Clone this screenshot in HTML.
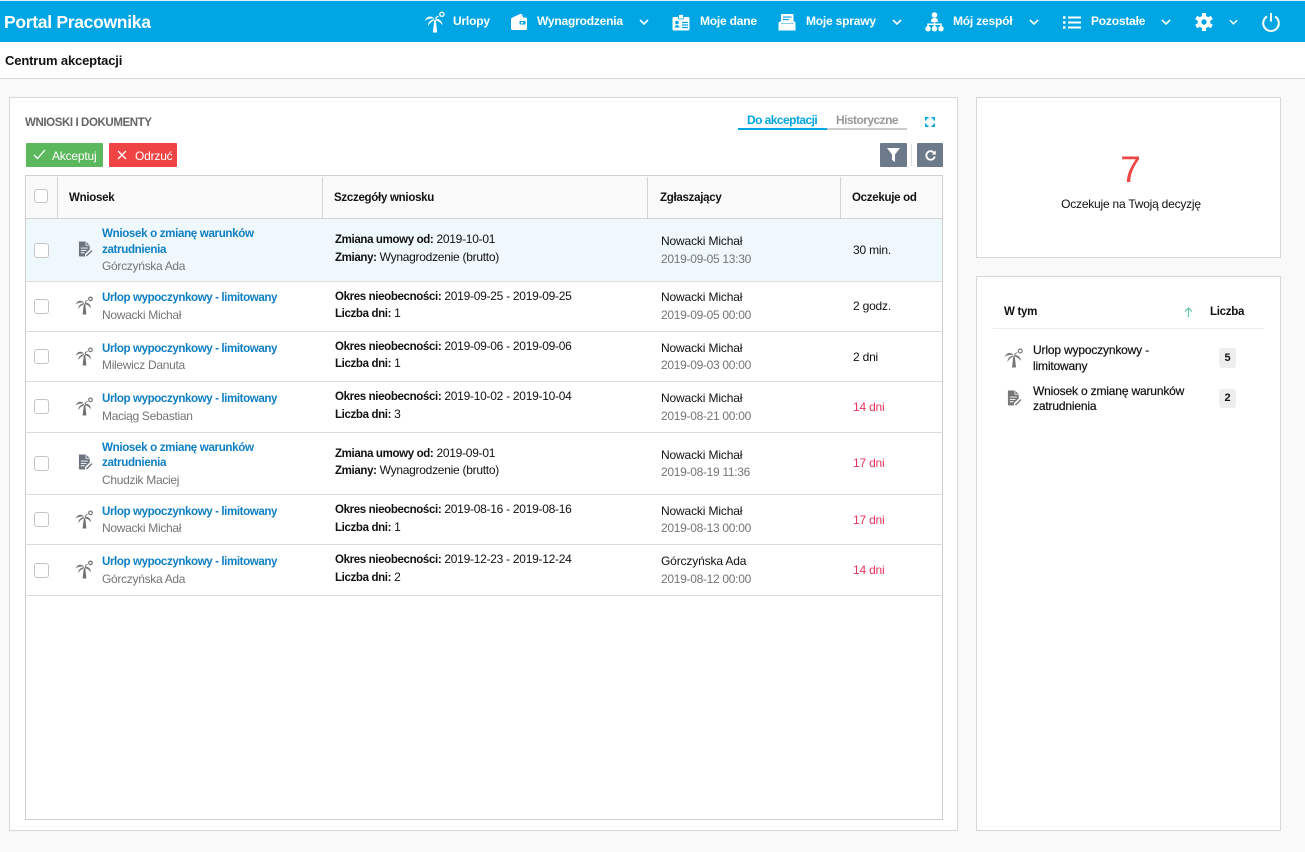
<!DOCTYPE html>
<html lang="pl">
<head>
<meta charset="utf-8">
<title>Portal Pracownika</title>
<style>
html,body{margin:0;padding:0;width:1305px;height:852px;overflow:hidden;background:#f9f9f9;font-family:"Liberation Sans",Arial,sans-serif;font-size:12px;color:#111}
.a{position:absolute}
.t{position:absolute;white-space:nowrap;line-height:16px;font-size:12px;letter-spacing:-.1px}
.b{font-weight:bold}
.h{font-weight:bold;font-size:11.5px;letter-spacing:-.28px;color:#111;margin-top:1px}
.top{position:absolute;left:0;top:1px;width:1305px;height:41px;background:#00a5e3}
.n{position:absolute;white-space:nowrap;color:#fff;font-weight:bold;font-size:12px;line-height:16px;top:13px;letter-spacing:-.2px}
.panel{position:absolute;background:#fff;border:1px solid #d8d8d8;box-sizing:border-box}
.line{position:absolute;height:1px;background:#dcdcdc;left:26px;width:916px}
.v{position:absolute;width:1px;background:#d4d4d4;top:177px;height:41px}
.cb{position:absolute;box-sizing:border-box;width:15px;height:15px;border:1px solid #c4c4c4;border-radius:3px;background:#fff;left:34px}
.l{color:#0f7fc4;font-weight:bold;font-size:11.6px;letter-spacing:-.42px;margin-top:1px}
.l2{letter-spacing:-.35px}
.g{color:#757575;letter-spacing:-.3px}
.r{color:#e8345f}
.d{color:#111;letter-spacing:-.15px}
.s{color:#111;letter-spacing:-.27px}
.s b{font-size:11.5px;letter-spacing:-.36px}
.w{letter-spacing:-.2px}
svg{position:absolute;overflow:visible}
</style>
</head>
<body>
<svg width="0" height="0" style="left:0;top:0">
<defs>
<symbol id="palm" viewBox="0 0 20 20">
<path d="M9.500 7C7 4 3 4 .5 9C3 7 6 6.500 9.500 7Z" fill="currentColor"/>
<path d="M9.500 7.500C6 8 3.500 10 3.500 14C5 11 7 9.500 9.500 8.500Z" fill="currentColor"/>
<path d="M10 7C11 4.800 12.500 4 14 4.500C12.500 5.300 11.500 6 10.800 7.500Z" fill="currentColor"/>
<path d="M10.500 7C14 7 16.500 9 17 13C15 10.500 13 9 10.500 8.500Z" fill="currentColor"/>
<path d="M9.300 8.500H10.800L12 19.500H8Z" fill="currentColor"/>
<circle cx="16.300" cy="3" r="1.900" fill="none" stroke="currentColor" stroke-width="1.200"/>
</symbol>
<symbol id="doc" viewBox="0 0 16 16">
<path d="M1 0H8.500L12.500 4V8.500L7.500 13.500V16H2.500A1.500 1.500 0 0 1 1 14.500Z" fill="currentColor"/>
<path d="M8.500 0V4H12.500" fill="none" stroke="#fff" stroke-width=".8"/>
<path d="M3 7H10.500M3 9.500H9M3 12H7" stroke="#fff" stroke-width="1" fill="none"/>
<path d="M9 15.500L14.800 9.700" stroke="currentColor" stroke-width="1.500" fill="none"/>
</symbol>
<symbol id="chev" viewBox="0 0 10 6">
<path d="M1 1L5 5L9 1" fill="none" stroke="#fff" stroke-width="1.600"/>
</symbol>
</defs>
</svg>

<div class="a" style="left:0;top:0;width:1305px;height:1px;background:#d9f1fb"></div>
<div class="top"></div>
<div class="a" style="left:4px;top:11px;color:#fff;font-weight:bold;font-size:17.500px;line-height:22px;white-space:nowrap;letter-spacing:-.3px">Portal Pracownika</div>

<svg style="left:424px;top:11px;color:#fff" width="22" height="22"><use href="#palm" width="22" height="22"/></svg>
<div class="n" style="left:453px">Urlopy</div>

<svg style="left:510px;top:13px" width="18" height="18" viewBox="0 0 18 18"><path d="M1 6.500C1 5.500 1.500 5 2.500 4.500L10 1C11 .6 11.800 1 12.200 2L13.200 4.500H15.500C16.500 4.500 17 5 17 6V15.500C17 16.500 16.500 17 15.500 17H2.500C1.500 17 1 16.500 1 15.500Z" fill="#fff"/><rect x="9.500" y="8" width="6" height="3.500" rx=".5" fill="#00a5e3"/><rect x="11" y="9" width="2" height="1.500" fill="#fff"/></svg>
<div class="n" style="left:537px">Wynagrodzenia</div>
<svg style="left:639px;top:19px" width="10" height="6"><use href="#chev" width="10" height="6"/></svg>

<svg style="left:672px;top:14px" width="18" height="17" viewBox="0 0 18 17"><rect x="0.500" y="3" width="17" height="13.500" rx="1.500" fill="#fff"/><rect x="6.500" y=".5" width="5" height="4.500" rx=".5" fill="#fff" stroke="#00a5e3" stroke-width=".8"/><circle cx="5" cy="8.500" r="1.800" fill="#00a5e3"/><path d="M2.500 13.500C2.500 10.500 7.500 10.500 7.500 13.500Z" fill="#00a5e3"/><path d="M10 8.500H16M10 11H16M10 13.500H16" stroke="#00a5e3" stroke-width="1.200"/></svg>
<div class="n" style="left:700px">Moje dane</div>

<svg style="left:778px;top:13px" width="18" height="18" viewBox="0 0 18 18"><rect x="3" y="1" width="12.500" height="9.500" rx=".8" fill="#fff"/><path d="M5 3.500H13.500V4.600H5ZM5 6H11V7.100H5Z" fill="#00a5e3"/><path d="M1 9.300L3 8V11H15.500V8L17.500 9.300V17.500H.5V9.800Z" fill="#fff"/></svg>
<div class="n" style="left:806px">Moje sprawy</div>
<svg style="left:892px;top:19px" width="10" height="6"><use href="#chev" width="10" height="6"/></svg>

<svg style="left:925px;top:12px" width="19" height="20" viewBox="0 0 19 20"><circle cx="9.500" cy="3" r="2.800" fill="#fff"/><path d="M6 10C6 7 7 6 9.500 6S13 7 13 10Z" fill="#fff"/><path d="M9.500 9V12M3 15V12.200H16V15M9.500 12V15" stroke="#fff" stroke-width="1.500" fill="none"/><circle cx="3" cy="16.700" r="2.700" fill="#fff"/><circle cx="9.500" cy="16.700" r="2.700" fill="#fff"/><circle cx="16" cy="16.700" r="2.700" fill="#fff"/></svg>
<div class="n" style="left:953px">Mój zespół</div>
<svg style="left:1029px;top:19px" width="10" height="6"><use href="#chev" width="10" height="6"/></svg>

<svg style="left:1063px;top:16px" width="18" height="13" viewBox="0 0 18 13"><path d="M5 1.500H18M5 6.500H18M5 11.500H18" stroke="#fff" stroke-width="2"/><path d="M0 1.500H2.500M0 6.500H2.500M0 11.500H2.500" stroke="#fff" stroke-width="2.400"/></svg>
<div class="n" style="left:1091px">Pozostałe</div>
<svg style="left:1161px;top:19px" width="10" height="6"><use href="#chev" width="10" height="6"/></svg>

<svg style="left:1195px;top:13px" width="18" height="18" viewBox="0 0 18 18"><circle cx="9" cy="9" r="6.300" fill="#fff"/><g stroke="#fff" stroke-width="4"><path d="M9 0V18"/><path d="M1.200 4.500L16.800 13.500"/><path d="M16.800 4.500L1.200 13.500"/></g><circle cx="9" cy="9" r="2.700" fill="#00a5e3"/></svg>
<svg style="left:1229px;top:19px" width="9" height="6"><use href="#chev" width="9" height="6"/></svg>

<svg style="left:1262px;top:12px" width="18" height="19" viewBox="0 0 18 19"><path d="M5 4.500A7.800 7.800 0 1 0 13 4.500" fill="none" stroke="#fff" stroke-width="2"/><path d="M9 1V9.500" stroke="#fff" stroke-width="2"/></svg>

<div class="a" style="left:0;top:42px;width:1305px;height:37px;background:#fff;border-bottom:1px solid #dcdcdc;box-sizing:border-box"></div>
<div class="t b" style="left:5px;top:53px;color:#111;font-size:13px;letter-spacing:-.15px">Centrum akceptacji</div>

<div class="panel" style="left:9px;top:97px;width:949px;height:734px"></div>
<div class="t b" style="left:25px;top:115px;color:#666;font-size:11.500px;letter-spacing:-.4px">WNIOSKI I DOKUMENTY</div>

<div class="t b" style="left:747px;top:112px;color:#00a5e3;letter-spacing:-.55px">Do akceptacji</div>
<div class="t b" style="left:836px;top:112px;color:#999;letter-spacing:-.55px">Historyczne</div>
<div class="a" style="left:738px;top:128px;width:89px;height:2px;background:#00a5e3"></div>
<div class="a" style="left:827px;top:128px;width:80px;height:2px;background:#ccc"></div>
<svg style="left:925px;top:117px" width="10" height="10" viewBox="0 0 10 10"><path d="M.8 3.500V.8H3.500M6.500 .8H9.200V3.500M9.200 6.500V9.200H6.500M3.500 9.200H.8V6.500" fill="none" stroke="#00a5e3" stroke-width="1.600"/></svg>

<div class="a" style="left:26px;top:143px;width:77px;height:24px;background:#5cb85c;border-radius:1px"></div>
<svg style="left:33px;top:149px" width="13" height="11" viewBox="0 0 13 11"><path d="M1 6L4.500 9.500L12 1" fill="none" stroke="#fff" stroke-width="1.300"/></svg>
<div class="t" style="left:52px;top:148px;color:#fff;letter-spacing:-.2px">Akceptuj</div>
<div class="a" style="left:109px;top:143px;width:68px;height:24px;background:#ef4444;border-radius:1px"></div>
<svg style="left:117px;top:150px" width="10" height="10" viewBox="0 0 10 10"><path d="M1 1L9 9M9 1L1 9" fill="none" stroke="#fff" stroke-width="1.300"/></svg>
<div class="t" style="left:135px;top:148px;color:#fff;letter-spacing:-.2px">Odrzuć</div>

<div class="a" style="left:880px;top:143px;width:27px;height:24px;background:#6c7a89;border-radius:1px"></div>
<svg style="left:887px;top:148px" width="13" height="14" viewBox="0 0 13 14"><path d="M0 0H13L8 6.500V14L5 12V6.500Z" fill="#fff"/></svg>
<div class="a" style="left:911px;top:144px;width:1px;height:22px;background:#ddd"></div>
<div class="a" style="left:917px;top:143px;width:26px;height:24px;background:#6c7a89;border-radius:1px"></div>
<svg style="left:925px;top:150px" width="11" height="11" viewBox="0 0 11 11"><path d="M9.300 3.200A4.300 4.300 0 1 0 9.800 6.500" fill="none" stroke="#fff" stroke-width="1.800"/><path d="M10.800 .5V4.500H6.800Z" fill="#fff"/></svg>

<div class="a" style="left:25px;top:175px;width:918px;height:645px;box-sizing:border-box;border:1px solid #cfcfcf;background:#fff"></div>
<div class="a" style="left:26px;top:176px;width:916px;height:42px;background:#fafafa"></div>
<div class="a" style="left:26px;top:218px;width:916px;height:1px;background:#d4d4d4"></div>
<div class="v" style="left:57px"></div>
<div class="v" style="left:322px"></div>
<div class="v" style="left:647px"></div>
<div class="v" style="left:840px"></div>
<div class="cb" style="top:189px;width:14px;height:14px"></div>
<div class="t h" style="left:69px;top:189px">Wniosek</div>
<div class="t h" style="left:334px;top:189px">Szczegóły wniosku</div>
<div class="t h" style="left:660px;top:189px">Zgłaszający</div>
<div class="t h" style="left:852px;top:189px">Oczekuje od</div>

<div class="a" style="left:26px;top:219px;width:916px;height:62px;background:#eff8fc"></div>
<div class="line" style="top:281px"></div>
<div class="line" style="top:331px"></div>
<div class="line" style="top:381px"></div>
<div class="line" style="top:432px"></div>
<div class="line" style="top:494px"></div>
<div class="line" style="top:544px"></div>
<div class="line" style="top:595px"></div>

<!-- Row 1 -->
<div class="cb" style="top:243px"></div>
<svg style="left:78px;top:241px;color:#6c7480" width="15" height="16"><use href="#doc" width="15" height="16"/></svg>
<div class="t l l2" style="left:102px;top:225px">Wniosek o zmianę warunków</div>
<div class="t l l2" style="left:102px;top:241px">zatrudnienia</div>
<div class="t g" style="left:102px;top:258px">Górczyńska Ada</div>
<div class="t s" style="left:335px;top:231px"><b>Zmiana umowy od:</b> 2019-10-01</div>
<div class="t s" style="left:335px;top:249px"><b>Zmiany:</b> Wynagrodzenie (brutto)</div>
<div class="t d" style="left:661px;top:233px">Nowacki Michał</div>
<div class="t g" style="left:661px;top:251px">2019-09-05 13:30</div>
<div class="t w" style="left:853px;top:242px">30 min.</div>

<!-- Row 2 -->
<div class="cb" style="top:299px"></div>
<svg style="left:75px;top:296px;color:#707070" width="19" height="19"><use href="#palm" width="19" height="19"/></svg>
<div class="t l" style="left:102px;top:289px">Urlop wypoczynkowy - limitowany</div>
<div class="t g" style="left:102px;top:307px">Nowacki Michał</div>
<div class="t s" style="left:335px;top:288px"><b>Okres nieobecności:</b> 2019-09-25 - 2019-09-25</div>
<div class="t s" style="left:335px;top:305px"><b>Liczba dni:</b> 1</div>
<div class="t d" style="left:661px;top:289px">Nowacki Michał</div>
<div class="t g" style="left:661px;top:307px">2019-09-05 00:00</div>
<div class="t w" style="left:853px;top:298px">2 godz.</div>

<!-- Row 3 -->
<div class="cb" style="top:349px"></div>
<svg style="left:75px;top:347px;color:#707070" width="19" height="19"><use href="#palm" width="19" height="19"/></svg>
<div class="t l" style="left:102px;top:340px">Urlop wypoczynkowy - limitowany</div>
<div class="t g" style="left:102px;top:357px">Milewicz Danuta</div>
<div class="t s" style="left:335px;top:338px"><b>Okres nieobecności:</b> 2019-09-06 - 2019-09-06</div>
<div class="t s" style="left:335px;top:355px"><b>Liczba dni:</b> 1</div>
<div class="t d" style="left:661px;top:340px">Nowacki Michał</div>
<div class="t g" style="left:661px;top:357px">2019-09-03 00:00</div>
<div class="t w" style="left:853px;top:349px">2 dni</div>

<!-- Row 4 -->
<div class="cb" style="top:399px"></div>
<svg style="left:75px;top:397px;color:#707070" width="19" height="19"><use href="#palm" width="19" height="19"/></svg>
<div class="t l" style="left:102px;top:390px">Urlop wypoczynkowy - limitowany</div>
<div class="t g" style="left:102px;top:408px">Maciąg Sebastian</div>
<div class="t s" style="left:335px;top:388px"><b>Okres nieobecności:</b> 2019-10-02 - 2019-10-04</div>
<div class="t s" style="left:335px;top:406px"><b>Liczba dni:</b> 3</div>
<div class="t d" style="left:661px;top:390px">Nowacki Michał</div>
<div class="t g" style="left:661px;top:408px">2019-08-21 00:00</div>
<div class="t r w" style="left:853px;top:399px">14 dni</div>

<!-- Row 5 -->
<div class="cb" style="top:456px"></div>
<svg style="left:78px;top:454px;color:#6c7480" width="15" height="16"><use href="#doc" width="15" height="16"/></svg>
<div class="t l l2" style="left:102px;top:439px">Wniosek o zmianę warunków</div>
<div class="t l l2" style="left:102px;top:454px">zatrudnienia</div>
<div class="t g" style="left:102px;top:472px">Chudzik Maciej</div>
<div class="t s" style="left:335px;top:445px"><b>Zmiana umowy od:</b> 2019-09-01</div>
<div class="t s" style="left:335px;top:462px"><b>Zmiany:</b> Wynagrodzenie (brutto)</div>
<div class="t d" style="left:661px;top:447px">Nowacki Michał</div>
<div class="t g" style="left:661px;top:464px">2019-08-19 11:36</div>
<div class="t r w" style="left:853px;top:455px">17 dni</div>

<!-- Row 6 -->
<div class="cb" style="top:512px"></div>
<svg style="left:75px;top:510px;color:#707070" width="19" height="19"><use href="#palm" width="19" height="19"/></svg>
<div class="t l" style="left:102px;top:503px">Urlop wypoczynkowy - limitowany</div>
<div class="t g" style="left:102px;top:520px">Nowacki Michał</div>
<div class="t s" style="left:335px;top:501px"><b>Okres nieobecności:</b> 2019-08-16 - 2019-08-16</div>
<div class="t s" style="left:335px;top:519px"><b>Liczba dni:</b> 1</div>
<div class="t d" style="left:661px;top:503px">Nowacki Michał</div>
<div class="t g" style="left:661px;top:520px">2019-08-13 00:00</div>
<div class="t r w" style="left:853px;top:512px">17 dni</div>

<!-- Row 7 -->
<div class="cb" style="top:563px"></div>
<svg style="left:75px;top:560px;color:#707070" width="19" height="19"><use href="#palm" width="19" height="19"/></svg>
<div class="t l" style="left:102px;top:553px">Urlop wypoczynkowy - limitowany</div>
<div class="t g" style="left:102px;top:571px">Górczyńska Ada</div>
<div class="t s" style="left:335px;top:551px"><b>Okres nieobecności:</b> 2019-12-23 - 2019-12-24</div>
<div class="t s" style="left:335px;top:569px"><b>Liczba dni:</b> 2</div>
<div class="t d" style="left:661px;top:553px">Górczyńska Ada</div>
<div class="t g" style="left:661px;top:571px">2019-08-12 00:00</div>
<div class="t r w" style="left:853px;top:562px">14 dni</div>

<!-- Right panels -->
<div class="panel" style="left:976px;top:97px;width:305px;height:161px"></div>
<div class="a" style="left:978px;top:148px;width:305px;text-align:center;font-size:37px;line-height:44px;color:#ef4444">7</div>
<div class="a" style="left:976px;top:196px;width:310px;text-align:center;font-size:12px;line-height:16px;letter-spacing:-.22px">Oczekuje na Twoją decyzję</div>

<div class="panel" style="left:976px;top:276px;width:305px;height:555px"></div>
<div class="t h" style="left:1004px;top:303px">W tym</div>
<svg style="left:1184px;top:307px" width="9" height="10" viewBox="0 0 9 10"><path d="M4.500 10V1M1 4.500L4.500 1L8 4.500" fill="none" stroke="#5cc7a0" stroke-width="1.100"/></svg>
<div class="t h" style="left:1210px;top:303px">Liczba</div>
<div class="a" style="left:993px;top:328px;width:271px;height:1px;background:#eee"></div>

<svg style="left:1004px;top:348px;color:#777" width="20" height="20"><use href="#palm" width="20" height="20"/></svg>
<div class="t" style="left:1033px;top:342px;letter-spacing:-.17px;-webkit-text-stroke:.2px #111">Urlop wypoczynkowy -</div>
<div class="t" style="left:1033px;top:358px;letter-spacing:-.17px;-webkit-text-stroke:.2px #111">limitowany</div>
<div class="a" style="left:1219px;top:348px;width:17px;height:20px;background:#eee;border-radius:3px;text-align:center;line-height:20px;font-size:11px;font-weight:bold">5</div>

<svg style="left:1007px;top:390px;color:#777" width="15" height="16"><use href="#doc" width="15" height="16"/></svg>
<div class="t" style="left:1033px;top:383px;letter-spacing:-.17px;-webkit-text-stroke:.2px #111">Wniosek o zmianę warunków</div>
<div class="t" style="left:1033px;top:398px;letter-spacing:-.17px;-webkit-text-stroke:.2px #111">zatrudnienia</div>
<div class="a" style="left:1219px;top:389px;width:17px;height:19px;background:#eee;border-radius:3px;text-align:center;line-height:19px;font-size:11px;font-weight:bold">2</div>
</body>
</html>
